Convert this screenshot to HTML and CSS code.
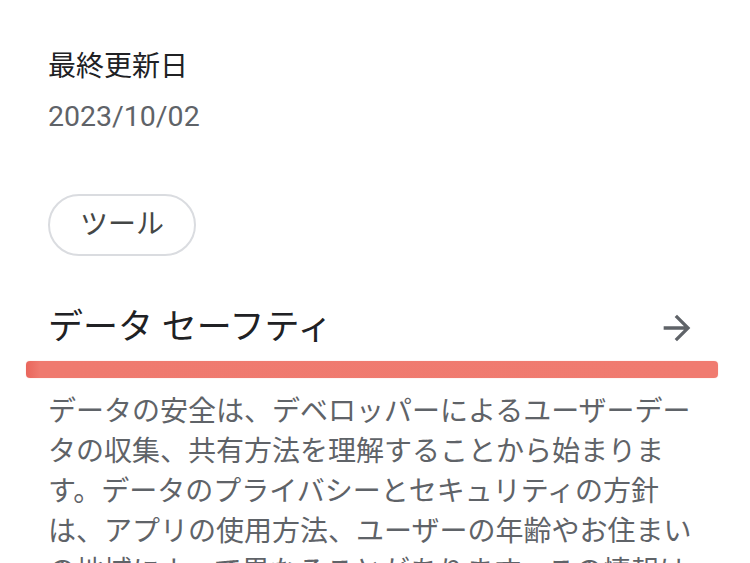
FILE: index.html
```html
<!DOCTYPE html>
<html lang="ja">
<head>
  <meta charset="UTF-8">
  <meta name="viewport" content="width=device-width, initial-scale=1.0">
  <title>アプリ情報</title>
  <link rel="stylesheet" href="styles.css">
</head>
<body>
  <div class="app-info">
    <div class="updated">
      <div class="updated-label">最終更新日</div>
      <div class="updated-date">2023/10/02</div>
    </div>

    <div class="chips">
      <span class="chip">ツール</span>
    </div>

    <div class="section-head">
      <h2>データ セーフティ</h2>
      <svg class="arrow" viewBox="0 0 24 24" width="40" height="40" aria-hidden="true">
        <path d="M12 4l-1.41 1.41L16.17 11H4v2h12.17l-5.58 5.59L12 20l8-8z"/>
      </svg>
    </div>
    <div class="marker"></div>

    <p class="section-text">データの安全は、デベロッパーによるユーザーデータの収集、共有方法を理解することから始まります。データのプライバシーとセキュリティの方針は、アプリの使用方法、ユーザーの年齢やお住まいの地域によって異なることがあります。この情報はデベロッパーから提供されたもので、今後更新される可能性があります。</p>
  </div>
</body>
</html>
```

FILE: styles.css
```css
* {
  box-sizing: border-box;
}
body {
  margin: 0;
  background: #fff;
  font-family: Roboto, "Noto Sans CJK JP", sans-serif;
  color: #202124;
}
.app-info {
  padding: 47px 48px 0;
}
.updated-label {
  font-size: 28px;
  line-height: 40px;
  color: #202124;
}
.updated-date {
  margin-top: 10px;
  font-size: 28.5px;
  line-height: 40px;
  color: #5f6368;
}
.chips {
  margin-top: 57px;
  display: flex;
}
.chip {
  height: 62px;
  padding: 0 30px;
  border: 2px solid #dadce0;
  border-radius: 31px;
  font-size: 28px;
  line-height: 58px;
  color: #444746;
}
.section-head {
  margin-top: 50px;
  display: flex;
  align-items: center;
  justify-content: space-between;
}
.section-head h2 {
  margin: 0;
  font-size: 35px;
  line-height: 44px;
  font-weight: 400;
  color: #202124;
}
.arrow {
  fill: #5f6368;
  margin-right: 5px;
}
.marker {
  margin: 11px 0 0 -22px;
  width: 692px;
  height: 17px;
  border-radius: 4px;
  background: linear-gradient(to right, #e9665c 0, #ef7a6f 14px, #f07b70 100%);
  box-shadow: 0 0 1px rgba(239, 122, 111, 0.6);
}
.section-text {
  margin: 14px 0 0;
  font-size: 28px;
  line-height: 40px;
  color: #5f6368;
}
```
